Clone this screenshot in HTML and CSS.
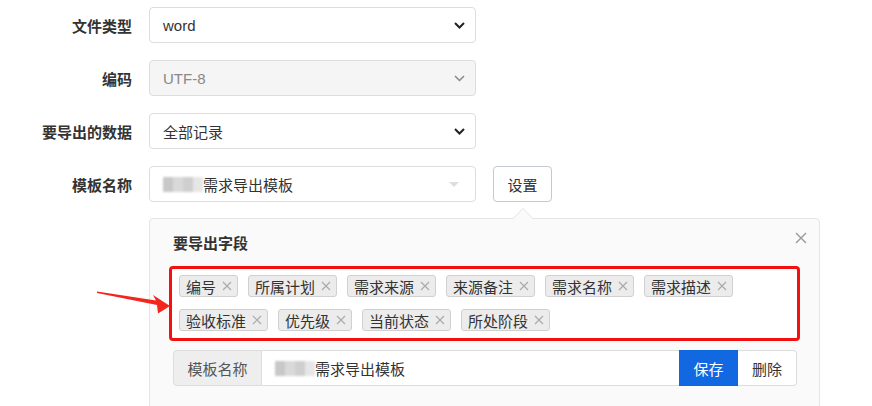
FILE: index.html
```html
<!DOCTYPE html>
<html lang="zh-CN">
  <head>
    <meta charset="utf-8">
    <meta name="viewport" content="width=device-width, initial-scale=1">
    <link rel="stylesheet" href="styles.css">
  </head>
  <body>
  <div class="page">
    <div class="row">
      <label class="label">文件类型</label>
      <div class="select">
        <span>word</span>
        <svg class="chev" width="11" height="7" viewBox="0 0 11 7"><path d="M1 1 L5.5 5.5 L10 1" fill="none" stroke="#222" stroke-width="2"/></svg>
      </div>
    </div>
    <div class="row">
      <label class="label">编码</label>
      <div class="select disabled">
        <span>UTF-8</span>
        <svg class="chev" width="11" height="7" viewBox="0 0 11 7"><path d="M1 1 L5.5 5.5 L10 1" fill="none" stroke="#888" stroke-width="1.5"/></svg>
      </div>
    </div>
    <div class="row">
      <label class="label">要导出的数据</label>
      <div class="select">
        <span>全部记录</span>
        <svg class="chev" width="11" height="7" viewBox="0 0 11 7"><path d="M1 1 L5.5 5.5 L10 1" fill="none" stroke="#222" stroke-width="2"/></svg>
      </div>
    </div>
    <div class="row">
      <label class="label">模板名称</label>
      <div class="select">
        <span class="blur"><i></i><i class="b2"></i><i class="b3"></i><i class="b4"></i></span><span>需求导出模板</span>
        <svg class="chev tri" width="10" height="5" viewBox="0 0 10 5"><path d="M0 0 L10 0 L5 5 Z" fill="#ddd"/></svg>
      </div>
      <button class="btn-set">设置</button>
    </div>

    <div class="popover">
      <div class="pop-head">
        <span class="pop-title">要导出字段</span>
        <svg class="pop-close" width="12" height="12" viewBox="0 0 12 12"><path d="M1 1 L11 11 M11 1 L1 11" stroke="#999" stroke-width="1.4"/></svg>
      </div>
      <div class="fields">
        <span class="tag">编号<svg width="10" height="10" viewBox="0 0 10 10"><path d="M1 1 L9 9 M9 1 L1 9" stroke="#aaa" stroke-width="1.2"/></svg></span>
        <span class="tag">所属计划<svg width="10" height="10" viewBox="0 0 10 10"><path d="M1 1 L9 9 M9 1 L1 9" stroke="#aaa" stroke-width="1.2"/></svg></span>
        <span class="tag">需求来源<svg width="10" height="10" viewBox="0 0 10 10"><path d="M1 1 L9 9 M9 1 L1 9" stroke="#aaa" stroke-width="1.2"/></svg></span>
        <span class="tag">来源备注<svg width="10" height="10" viewBox="0 0 10 10"><path d="M1 1 L9 9 M9 1 L1 9" stroke="#aaa" stroke-width="1.2"/></svg></span>
        <span class="tag">需求名称<svg width="10" height="10" viewBox="0 0 10 10"><path d="M1 1 L9 9 M9 1 L1 9" stroke="#aaa" stroke-width="1.2"/></svg></span>
        <span class="tag">需求描述<svg width="10" height="10" viewBox="0 0 10 10"><path d="M1 1 L9 9 M9 1 L1 9" stroke="#aaa" stroke-width="1.2"/></svg></span>
        <span class="tag">验收标准<svg width="10" height="10" viewBox="0 0 10 10"><path d="M1 1 L9 9 M9 1 L1 9" stroke="#aaa" stroke-width="1.2"/></svg></span>
        <span class="tag">优先级<svg width="10" height="10" viewBox="0 0 10 10"><path d="M1 1 L9 9 M9 1 L1 9" stroke="#aaa" stroke-width="1.2"/></svg></span>
        <span class="tag">当前状态<svg width="10" height="10" viewBox="0 0 10 10"><path d="M1 1 L9 9 M9 1 L1 9" stroke="#aaa" stroke-width="1.2"/></svg></span>
        <span class="tag">所处阶段<svg width="10" height="10" viewBox="0 0 10 10"><path d="M1 1 L9 9 M9 1 L1 9" stroke="#aaa" stroke-width="1.2"/></svg></span>
      </div>
      <div class="input-group">
        <span class="addon">模板名称</span>
        <div class="input"><span class="blur"><i></i><i class="b2"></i><i class="b3"></i><i class="b4"></i></span><span>需求导出模板</span></div>
        <button class="btn-save">保存</button>
        <button class="btn-del">删除</button>
      </div>
    </div>

    <svg class="red-arrow" width="85" height="35" viewBox="0 0 85 35">
      <polygon points="7,6.5 66,15.5 63,10 80,21 68,28.5 67,20 7,8" fill="#f2261c"/>
    </svg>
  </div>
  </body>
</html>
```

FILE: styles.css
```css
body {
  margin: 0;
  background: #fff;
  font-family: "Liberation Sans", "Noto Sans CJK SC", sans-serif;
  font-size: 15px;
  color: #333;
}
.page {
  position: relative;
  padding-top: 7px;
}
.row {
  display: flex;
  align-items: center;
  height: 36px;
  margin-bottom: 17px;
}
.label {
  width: 132px;
  padding-right: 17px;
  text-align: right;
  font-weight: bold;
  color: #333;
}
.select {
  box-sizing: border-box;
  width: 327px;
  height: 36px;
  border: 1px solid #ddd;
  border-radius: 4px;
  display: flex;
  align-items: center;
  padding: 0 10px 0 13px;
  background: #fff;
}
.select .chev {
  margin-left: auto;
}
.select .tri {
  margin-right: 6px;
}
.select.disabled {
  background: #f5f5f5;
  color: #888;
}
.blur {
  display: inline-flex;
  width: 40px;
  height: 15px;
  filter: blur(1px);
}
.blur i {
  flex: 1;
  background: #c8c8c8;
}
.blur .b2 { background: #d9d9d9; }
.blur .b3 { background: #cfcfcf; }
.blur .b4 { background: #e6e6e6; }
.btn-set {
  margin-left: 17px;
  width: 59px;
  height: 36px;
  border: 1px solid #c4c9d2;
  border-radius: 4px;
  background: #fff;
  font: inherit;
  color: #333;
}

.popover {
  position: relative;
  box-sizing: border-box;
  margin: -1px 0 0 149px;
  width: 671px;
  height: 210px;
  padding: 13px 23px 0 23px;
  background: #fafafa;
  border: 1px solid #e5e5e5;
  border-radius: 4px;
}
.popover::before,
.popover::after {
  content: "";
  position: absolute;
  left: 362px;
  border: 11px solid transparent;
  border-top: 0;
}
.popover::before {
  top: -11px;
  border-bottom-color: #e3e3e3;
}
.popover::after {
  top: -10px;
  border-bottom-color: #fafafa;
}
.pop-head {
  display: flex;
  align-items: center;
  height: 20px;
}
.pop-title {
  font-weight: bold;
}
.pop-close {
  margin-left: auto;
  margin-right: -11px;
  margin-top: -8px;
}
.fields {
  margin: 14px -4px 0 -4px;
  border: 3px solid #f51010;
  border-radius: 4px;
  padding: 6px 7px 7px;
  display: flex;
  flex-wrap: wrap;
  column-gap: 10px;
  row-gap: 12px;
  background: #fff;
}
.tag {
  box-sizing: border-box;
  height: 22px;
  display: inline-flex;
  align-items: center;
  padding: 0 5px 0 6px;
  border: 1px solid #d0d0d0;
  border-radius: 3px;
  background: #ececec;
  color: #333;
}
.tag svg {
  margin-left: 6px;
}
.input-group {
  margin-top: 9px;
  display: flex;
  height: 36px;
  width: 624px;
  box-sizing: border-box;
}
.addon {
  box-sizing: border-box;
  width: 89px;
  display: flex;
  align-items: center;
  justify-content: center;
  background: #eee;
  border: 1px solid #ddd;
  border-radius: 4px 0 0 4px;
  color: #555;
}
.input {
  flex: 1;
  display: flex;
  align-items: center;
  padding-left: 13px;
  background: #fff;
  border-top: 1px solid #ddd;
  border-bottom: 1px solid #ddd;
}
.btn-save {
  width: 59px;
  border: 1px solid #0f66dd;
  background: #1168e0;
  color: #fff;
  font: inherit;
}
.btn-del {
  width: 59px;
  border: 1px solid #ddd;
  border-left: 0;
  border-radius: 0 4px 4px 0;
  background: #fff;
  color: #333;
  font: inherit;
}
.red-arrow {
  position: absolute;
  left: 90px;
  top: 285px;
}
```
